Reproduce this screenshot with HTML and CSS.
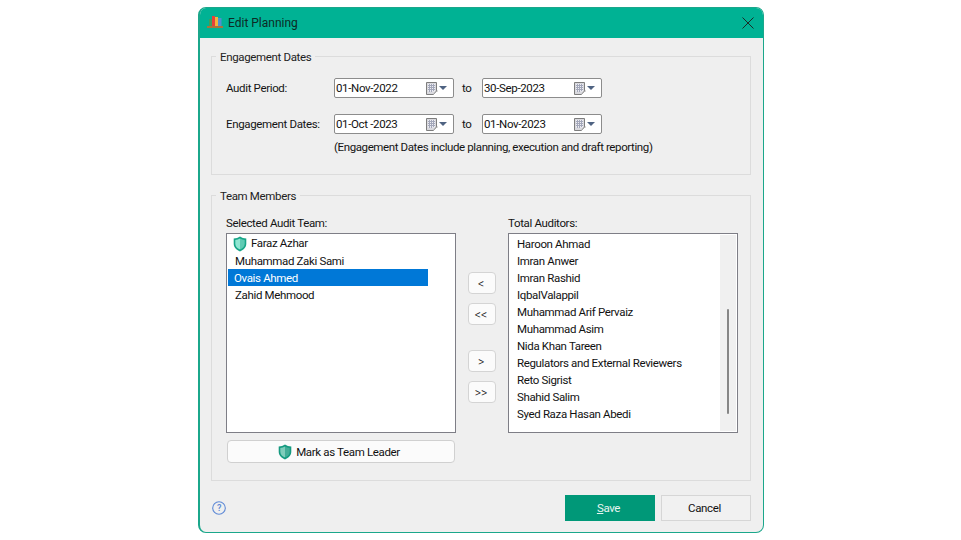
FILE: index.html
```html
<!DOCTYPE html>
<html lang="en">
<head>
<meta charset="utf-8">
<title>Edit Planning</title>
<link rel="stylesheet" href="styles.css">
</head>
<body>
<svg class="defs" width="0" height="0" aria-hidden="true">
  <defs>
    <symbol id="cal" viewBox="0 0 12 13">
      <path d="M.5.5h10v8.500l-3 3.500h-7z" fill="#d9d9de" stroke="#7d7d7d"/>
      <path d="M2 2h7v7.500H2z" fill="#eeeef2"/>
      <path d="M2 3.500h7M2 5.500h7M2 7.500h7M3.500 2v8M5.500 2v8M7.500 2v7" stroke="#a3a7ba"/>
      <path d="M7.500 12.500l3-3.500h1.300" fill="none" stroke="#a9a9a9"/>
    </symbol>
    <symbol id="shield" viewBox="0 0 14 16">
      <path d="M7 .6c1.800 1.300 3.900 1.900 6.300 2v5.200c0 3.500-2.500 6-6.300 7.600C3.200 13.800.7 11.300.7 7.800V2.600C3.100 2.500 5.200 1.900 7 .6z" fill="#18a588"/>
      <path d="M7 2.400c1.400.9 2.900 1.400 4.700 1.600v3.800c0 2.600-1.900 4.500-4.700 5.800z" fill="#5fcbb4"/>
      <path d="M7 2.400C5.600 3.300 4.100 3.800 2.300 4v3.800c0 2.600 1.900 4.500 4.700 5.800z" fill="#8fe6d2"/>
    </symbol>
    <symbol id="shield-dark" viewBox="0 0 14 16">
      <path d="M7 .6c1.800 1.300 3.900 1.900 6.300 2v5.200c0 3.500-2.500 6-6.300 7.600C3.200 13.800.7 11.300.7 7.800V2.600C3.100 2.500 5.200 1.900 7 .6z" fill="#159a80"/>
      <path d="M7 2.400c1.400.9 2.900 1.400 4.700 1.600v3.800c0 2.600-1.900 4.500-4.700 5.800z" fill="#43ad97"/>
      <path d="M7 2.400C5.600 3.300 4.100 3.800 2.300 4v3.800c0 2.600 1.900 4.500 4.700 5.800z" fill="#7fcdbb"/>
    </symbol>
  </defs>
</svg>
<div class="window">
  <header class="titlebar">
    <svg class="logo" viewBox="0 0 16 12" width="16" height="12" aria-hidden="true">
      <rect x="2" y="3" width="3" height="7" fill="#3f9e5c"/>
      <rect x="5" y="0" width="3" height="10" fill="#e5413a"/>
      <rect x="8" y="1" width="3" height="9" fill="#f2b43a"/>
      <rect x="11" y="2" width="3.500" height="8" fill="#4f8fd0"/>
      <rect x="0" y="10" width="16" height="2" fill="#a8743c"/>
    </svg>
    <span class="title">Edit Planning</span>
    <svg class="close" viewBox="0 0 12 12" width="12" height="12" aria-hidden="true">
      <path d="M.5.500l11 11M11.500.500l-11 11" stroke="#1c2b28" stroke-width="1" fill="none"/>
    </svg>
  </header>
  <main class="content">
    <fieldset class="group group-dates">
      <legend>Engagement Dates</legend>
      <div class="date-row">
        <span class="field-label">Audit Period:</span>
        <div class="date"><span>01-Nov-2022</span><svg class="cal"><use href="#cal"/></svg><i class="caret"></i></div>
        <span class="to">to</span>
        <div class="date"><span>30-Sep-2023</span><svg class="cal"><use href="#cal"/></svg><i class="caret"></i></div>
      </div>
      <div class="date-row">
        <span class="field-label">Engagement Dates:</span>
        <div class="date"><span>01-Oct -2023</span><svg class="cal"><use href="#cal"/></svg><i class="caret"></i></div>
        <span class="to">to</span>
        <div class="date"><span>01-Nov-2023</span><svg class="cal"><use href="#cal"/></svg><i class="caret"></i></div>
      </div>
      <p class="note">(Engagement Dates include planning, execution and draft reporting)</p>
    </fieldset>
    <fieldset class="group group-team">
      <legend>Team Members</legend>
      <div class="team">
        <div class="team-col">
          <div class="list-label">Selected Audit Team:</div>
          <ul class="list">
            <li class="leader"><svg class="shield"><use href="#shield"/></svg>Faraz Azhar</li>
            <li>Muhammad Zaki Sami</li>
            <li class="selected">Ovais Ahmed</li>
            <li>Zahid Mehmood</li>
          </ul>
          <button class="mark" type="button"><svg class="shield"><use href="#shield-dark"/></svg>Mark as Team Leader</button>
        </div>
        <div class="movers">
          <button class="move" type="button">&lt;</button>
          <button class="move" type="button">&lt;&lt;</button>
          <button class="move move-gap" type="button">&gt;</button>
          <button class="move" type="button">&gt;&gt;</button>
        </div>
        <div class="team-col">
          <div class="list-label">Total Auditors:</div>
          <div class="list list-scroll">
            <ul class="rows">
              <li>Haroon Ahmad</li>
              <li>Imran Anwer</li>
              <li>Imran Rashid</li>
              <li>IqbalValappil</li>
              <li>Muhammad Arif Pervaiz</li>
              <li>Muhammad Asim</li>
              <li>Nida Khan Tareen</li>
              <li>Regulators and External Reviewers</li>
              <li>Reto Sigrist</li>
              <li>Shahid Salim</li>
              <li>Syed Raza Hasan Abedi</li>
            </ul>
            <div class="scrollbar"><div class="thumb"></div></div>
          </div>
        </div>
      </div>
    </fieldset>
    <footer class="footer">
      <svg class="help" viewBox="0 0 14 14" width="14" height="14" aria-hidden="true">
        <circle cx="7" cy="7" r="6.300" fill="none" stroke="#5f8ad6" stroke-width="1.100"/>
        <text x="7" y="10.200" text-anchor="middle" class="help-mark">?</text>
      </svg>
      <button class="btn btn-save" type="button"><u>S</u>ave</button>
      <button class="btn btn-cancel" type="button">Cancel</button>
    </footer>
  </main>
</div>
</body>
</html>
```
FILE: styles.css
```css
* { box-sizing: border-box; }
html, body { margin: 0; padding: 0; }
body {
  background: #fff;
  font-family: Roboto, "Liberation Sans", sans-serif;
  font-size: 11.5px;
  letter-spacing: -0.35px;
  color: #141414;
  width: 961px;
  height: 540px;
  overflow: hidden;
}
.defs { display: block; height: 0; }
.window {
  width: 566px;
  height: 526px;
  margin: 7px 0 0 198px;
  background: #efefef;
  border: 1px solid #1ba78b;
  border-left-width: 2px;
  border-radius: 8px;
  overflow: hidden;
  display: flex;
  flex-direction: column;
}
.titlebar {
  flex: none;
  height: 31px;
  margin-top: -1px;
  background: #00b294;
  display: flex;
  align-items: center;
  padding: 0 9px 0 7px;
}
.logo { flex: none; margin-top: -1px; }
.title { margin-left: 5px; font-size: 12px; letter-spacing: 0; color: #0d2a25; }
.close { margin-left: auto; }
.content {
  flex: 1;
  display: flex;
  flex-direction: column;
  padding: 10px 12px 0 11px;
}
.group {
  margin: 0;
  border: 1px solid #dcdcdc;
  padding: 0 14px;
  min-width: 0;
}
.group legend {
  margin-left: -10px;
  padding: 1px 4px 0;
  font-size: 11.5px;
  line-height: 16px;
  color: #222;
}
.group-dates { height: 127px; padding-top: 13px; }
.group-team { height: 294px; margin-top: 12px; padding-top: 11px; }
.date-row {
  display: flex;
  align-items: center;
  height: 20px;
  margin-bottom: 16px;
}
.field-label { width: 108px; flex: none; }
.date {
  width: 120px;
  height: 20px;
  flex: none;
  background: #fff;
  border: 1px solid #8c8c8c;
  border-radius: 2px;
  display: flex;
  align-items: center;
  padding: 0 6px 0 1px;
  color: #111;
}
.cal { width: 12px; height: 13px; margin-left: auto; flex: none; }
.caret {
  flex: none;
  margin-left: 1px;
  width: 0;
  height: 0;
  border-left: 4px solid transparent;
  border-right: 4px solid transparent;
  border-top: 4px solid #4f6382;
}
.to { width: 28px; padding-left: 8px; flex: none; }
.note { margin: -11px 0 0 108px; line-height: 16px; letter-spacing: -0.39px; }
.team { display: flex; }
.team-col { width: 230px; flex: none; display: flex; flex-direction: column; }
.list-label { height: 16px; line-height: 16px; }
.list {
  list-style: none;
  margin: 2px 0 0;
  height: 200px;
  background: #fff;
  border: 1px solid #7e7e86;
  padding: 1px;
  color: #111;
}
.list li { height: 17px; line-height: 19px; padding-left: 7px; white-space: nowrap; }
.list .leader { line-height: 17px; padding-left: 5px; display: flex; align-items: center; }
.list .selected { width: 200px; background: #0078d7; color: #fff; padding-left: 6px; }
.list-scroll { display: flex; }
.rows { list-style: none; margin: 0; padding: 0; flex: 1; }
.rows li { padding-left: 7px; }
.scrollbar { flex: none; width: 16px; background: #f0f0f0; padding: 74px 0 0 7px; }
.thumb { width: 2px; height: 105px; background: #868686; border-radius: 1px; }
.shield { width: 14px; height: 16px; flex: none; margin-right: 4px; }
button { font: inherit; letter-spacing: inherit; color: #111; cursor: default; }
.mark {
  width: 228px;
  height: 23px;
  margin: 7px 0 0 1px;
  background: #fbfbfb;
  border: 1px solid #d0d0d0;
  border-radius: 4px;
  display: flex;
  align-items: center;
  justify-content: center;
  padding: 0 4px 0 0;
}
.movers {
  flex: none;
  width: 52px;
  padding: 57px 0 0 12px;
  display: flex;
  flex-direction: column;
  gap: 9px;
}
.move {
  width: 28px;
  height: 22px;
  flex: none;
  background: #fbfbfb;
  border: 1px solid #d4d4d4;
  border-radius: 4px;
  padding: 2px 2px 0 0;
  line-height: 18px;
  font-weight: 300;
  font-size: 12px;
  letter-spacing: 0;
}
.move-gap { margin-top: 16px; }
.footer {
  display: flex;
  align-items: center;
  gap: 6px;
  height: 26px;
  margin-top: 14px;
}
.help { margin-left: 1px; margin-right: auto; }
.help-mark { font-size: 9px; fill: #5f8ad6; font-weight: 600; }
.btn { width: 90px; height: 26px; padding: 0 3px 0 0; }
.btn-save { background: #009878; border: none; color: #e8f5f1; }
.btn-cancel { background: #f1f1f1; border: 1px solid #d6d6d6; }
```
